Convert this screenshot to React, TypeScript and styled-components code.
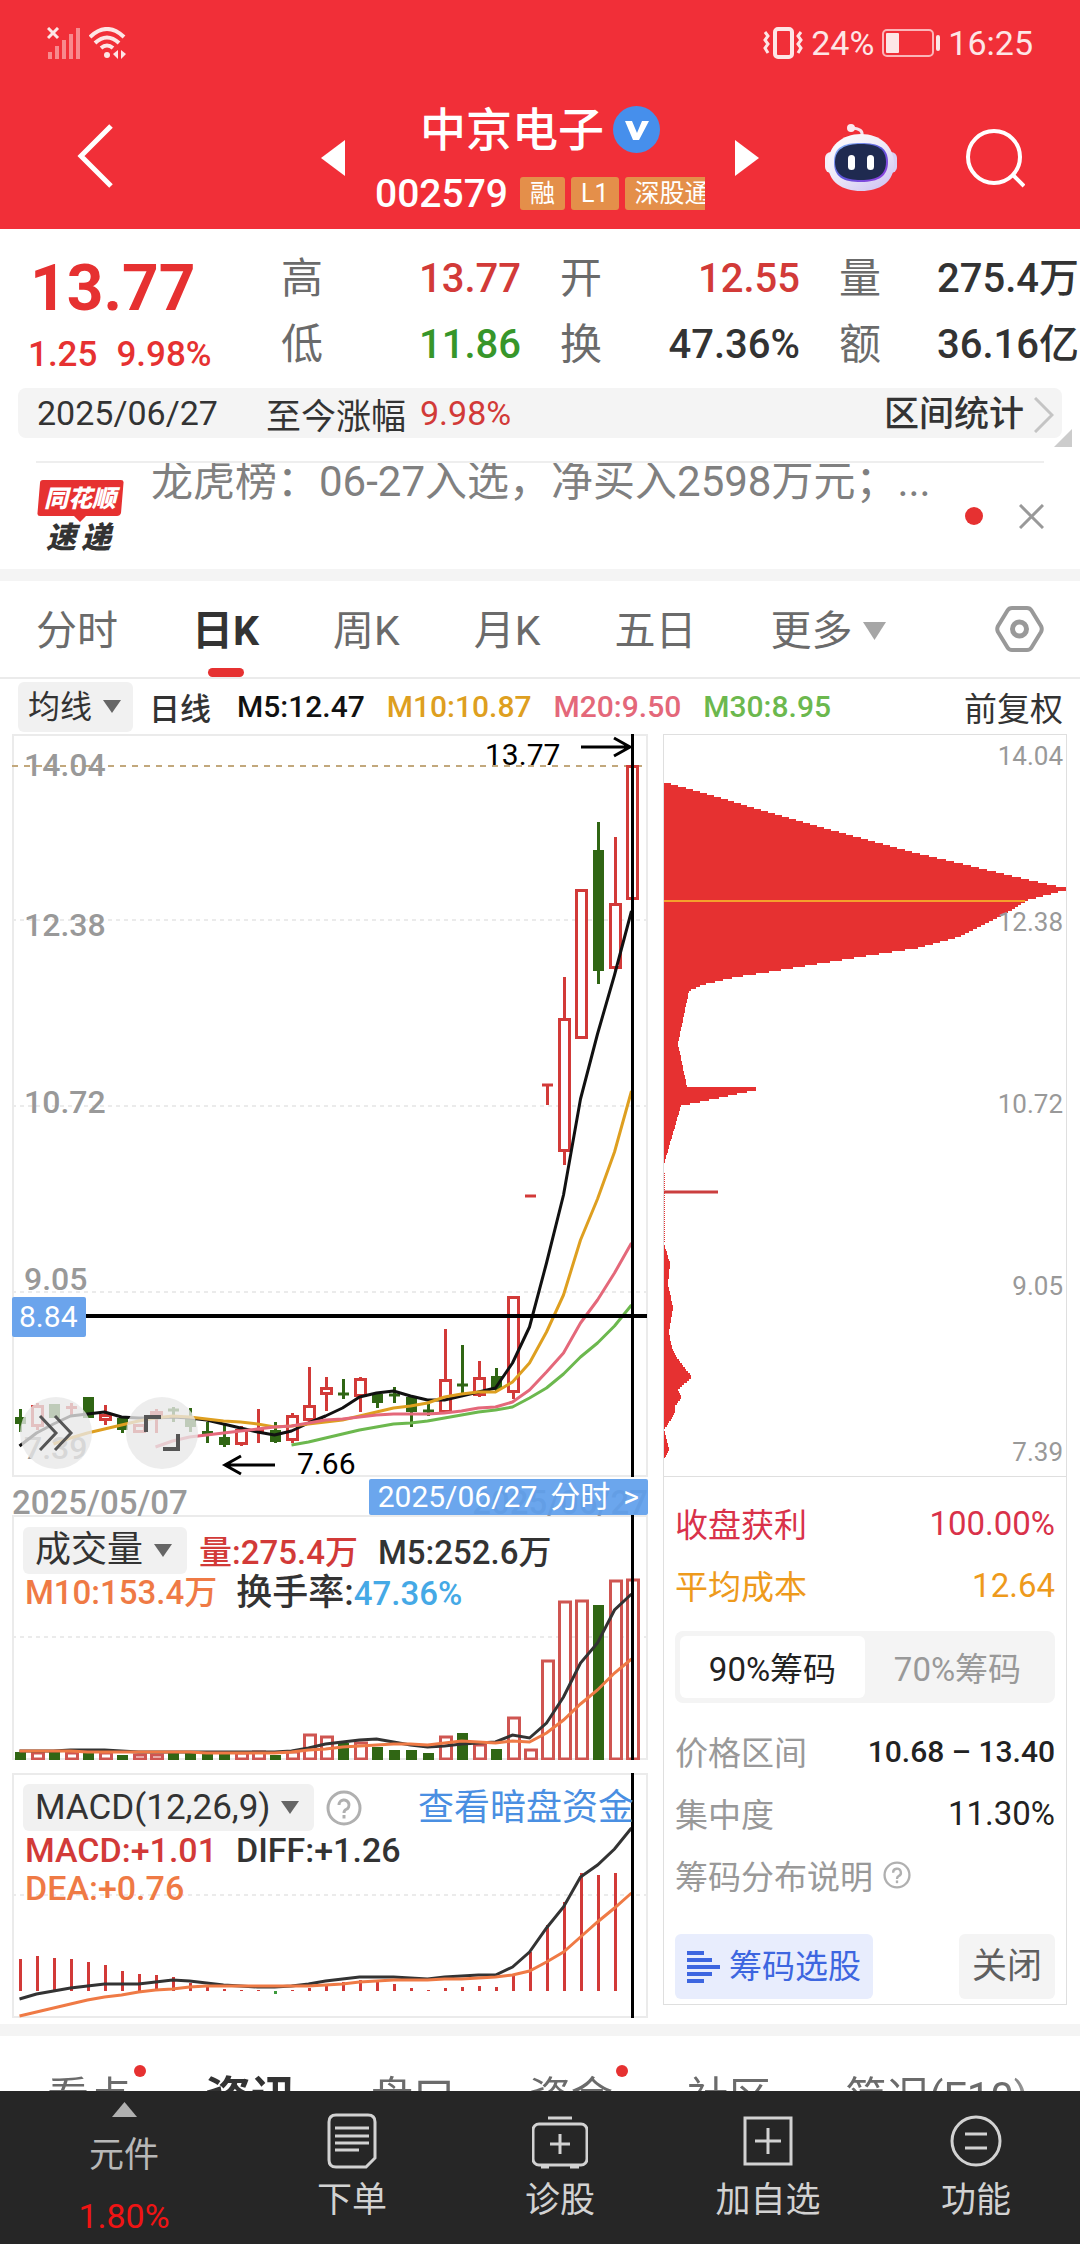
import React, { useState } from "react";
import styled, { createGlobalStyle, css } from "styled-components";

const RED = "#e63131";
const UP = "#d23a38";
const DOWN = "#306614";
const INK = "#333333";
const AMBER = "#de9f20";
const PINK = "#e4687a";
const LIME = "#6cb84e";
const ORANGE = "#ef7a45";
const FONT = 'Roboto, "Noto Sans CJK SC", sans-serif';

const GlobalStyle = createGlobalStyle`
  *, *::before, *::after { box-sizing: border-box; }
  body { margin: 0; background: #fff; font-family: ${FONT}; color: ${INK}; }
  button, select { font: inherit; color: inherit; border: 0; background: none; padding: 0; margin: 0; cursor: pointer; }
  svg { display: block; }
`;

const Screen = styled.div`
  display: flex;
  flex-direction: column;
  height: 100vh;
  background: #fff;
`;

const Content = styled.main`
  flex: 1;
  min-height: 0;
  overflow-y: auto;
  scrollbar-width: none;
`;

/* ---------- header ---------- */

const Header = styled.header`
  flex: none;
  background: #f12f38;
  color: #fff;
`;

const StatusBar = styled.div`
  display: flex;
  justify-content: space-between;
  align-items: center;
  height: 86px;
  padding: 0 47px;
  font-size: 34px;
  line-height: 40px;
  color: #fde6e6;
`;

const StatusGroup = styled.div`
  display: flex;
  align-items: center;
  gap: 8px;
`;

const TitleBar = styled.div`
  display: grid;
  grid-template-columns: 1fr auto 1fr;
  align-items: center;
  height: 143px;
  padding: 0 55px 0 77px;
`;

const StockSwitcher = styled.div`
  display: flex;
  align-items: center;
  gap: 30px;
  margin-left: -22px;
`;

const StockName = styled.div`
  width: 330px;
  padding-top: 8px;
`;

const NameRow = styled.h1`
  display: flex;
  justify-content: center;
  align-items: center;
  gap: 9px;
  margin: 0;
  font-size: 46px;
  font-weight: 500;
  line-height: 64px;
`;

const CodeRow = styled.div`
  display: flex;
  align-items: center;
  height: 64px;
  overflow: hidden;
  gap: 6px;
  font-size: 39px;
  font-weight: 500;
`;

const Code = styled.span`
  margin-right: 6px;
`;

const Tag = styled.span`
  flex: none;
  padding: 0 10px;
  border-radius: 3px;
  background: #e48f4a;
  font-size: 25px;
  font-weight: 400;
  line-height: 33px;
`;

const HeaderActions = styled.div`
  display: flex;
  justify-content: flex-end;
  align-items: center;
  gap: 68px;
`;

/* ---------- quote ---------- */

const Quote = styled.section`
  display: grid;
  grid-template-columns: minmax(0, 1fr) repeat(3, 240px);
  column-gap: 39px;
  padding: 17px 1px 10px 28px;
`;

const Price = styled.div`
  font-weight: 500;
  color: ${RED};
`;

const LastPrice = styled.div`
  padding-left: 2px;
  font-size: 64px;
  font-weight: 700;
  line-height: 86px;
`;

const Change = styled.div`
  display: flex;
  gap: 19px;
  font-size: 35px;
  line-height: 46px;
`;

const StatList = styled.dl`
  display: grid;
  grid-template-columns: auto 1fr;
  grid-auto-rows: 66px;
  align-items: center;
  margin: 0;
`;

const StatLabel = styled.dt`
  font-size: 42px;
  line-height: 66px;
  color: #6b6b6b;
`;

const StatValue = styled.dd<{ $tone?: string }>`
  margin: 0;
  text-align: right;
  white-space: nowrap;
  font-size: 40px;
  font-weight: 500;
  line-height: 66px;
  color: ${(p) => p.$tone || INK};
`;

const RangeBar = styled.div`
  position: relative;
  display: flex;
  align-items: center;
  height: 50px;
  margin: 0 18px;
  padding: 0 8px 0 19px;
  border-radius: 8px;
  background: #f4f4f4;
  font-size: 34px;
`;

const RangeLabel = styled.span`
  margin: 0 14px 0 48px;
  font-size: 35px;
`;

const RangeChange = styled.span`
  color: ${UP};
`;

const RangeButton = styled.button`
  display: flex;
  align-items: center;
  gap: 10px;
  margin-left: auto;
  padding-top: 3px;
  font-size: 35px;
  font-weight: 500;
  line-height: 47px;
`;

const Corner = styled.span`
  position: absolute;
  right: -10px;
  bottom: -9px;
  border-left: 18px solid transparent;
  border-bottom: 18px solid #cccccc;
`;

const News = styled.section`
  display: flex;
  align-items: center;
  height: 108px;
  margin: 23px 36px 0;
  border-top: 2px solid #eeeeee;
`;

const Headline = styled.a`
  flex: 1;
  align-self: flex-start;
  min-width: 0;
  margin-left: 25px;
  padding-bottom: 8px;
  overflow: hidden;
  white-space: nowrap;
  font-size: 42px;
  line-height: 38px;
  color: #808080;
  text-decoration: none;
`;

const UnreadDot = styled.span`
  width: 18px;
  height: 18px;
  margin-right: 36px;
  border-radius: 50%;
  background: ${RED};
`;

const Band = styled.div`
  height: 12px;
  background: #f4f4f4;
`;

/* ---------- period tabs ---------- */

const PeriodTabs = styled.nav`
  display: flex;
  align-items: center;
  gap: 74px;
  height: 98px;
  padding: 0 36px;
  border-bottom: 2px solid #ebebeb;
`;

const PeriodTab = styled.button<{ $active?: boolean }>`
  position: relative;
  display: flex;
  align-items: center;
  gap: 10px;
  padding-top: 4px;
  font-size: 41px;
  line-height: 92px;
  color: #6b6b6b;
  ${(p) =>
    p.$active &&
    css`
      font-weight: 700;
      color: ${INK};
      &::after {
        content: "";
        position: absolute;
        left: 50%;
        bottom: 0;
        width: 36px;
        height: 9px;
        margin-left: -18px;
        border-radius: 5px;
        background: ${RED};
      }
    `}
`;

const SettingsButton = styled.button`
  margin-left: auto;
`;

const Legend = styled.div`
  display: flex;
  align-items: center;
  gap: 22px;
  height: 55px;
  padding: 0 17px 0 18px;
  font-size: 30px;
  font-weight: 500;
`;

const LegendName = styled.span`
  margin: 0 4px 0 -6px;
  font-size: 31px;
`;

const Tone = styled.span<{ $tone?: string }>`
  color: ${(p) => p.$tone || INK};
`;

const Adjust = styled.button`
  margin-left: auto;
  font-size: 33px;
  font-weight: 400;
`;

const Picker = styled.label<{ $size: number }>`
  flex: none;
  display: grid;
  align-items: center;
  height: ${(p) => (p.$size > 32 ? 47 : 50)}px;
  border-radius: 6px;
  background: #f1f1f1;
  font-size: ${(p) => p.$size}px;
  font-weight: 400;
  > * {
    grid-area: 1 / 1;
  }
  > svg {
    justify-self: end;
    margin-right: ${(p) => (p.$size > 32 ? 15 : 12)}px;
    pointer-events: none;
  }
  > select {
    appearance: none;
    height: 100%;
    padding: 0 ${(p) => (p.$size > 32 ? 43 : 40)}px 0 ${(p) => (p.$size > 32 ? 12 : 10)}px;
  }
`;

/* ---------- charts ---------- */

const Board = styled.div`
  display: grid;
  grid-template-columns: minmax(0, 636fr) minmax(0, 404fr);
  column-gap: 15px;
  align-items: start;
  padding: 0 13px 6px 12px;
`;

const Stack = styled.div`
  display: flex;
  flex-direction: column;
`;

const ChartSvg = styled.svg`
  width: 100%;
  height: auto;
  font-family: ${FONT};
`;

const PriceChart = styled.div`
  position: relative;
`;

const ChartTools = styled.div`
  position: absolute;
  left: 8px;
  bottom: 8px;
  display: flex;
  gap: 34px;
`;

const RoundButton = styled.button`
  display: grid;
  place-items: center;
  width: 72px;
  height: 72px;
  border-radius: 50%;
  background: rgba(232, 232, 232, 0.78);
`;

const DateRow = styled.div`
  position: relative;
  display: flex;
  justify-content: space-between;
  align-items: flex-end;
  height: 38px;
  font-size: 33px;
  font-weight: 500;
  line-height: 24px;
  color: #999999;
`;

const DateLink = styled.button`
  position: absolute;
  right: 0;
  bottom: 0;
  display: flex;
  gap: 13px;
  padding: 0 9px;
  border-radius: 2px;
  background: rgba(94, 158, 236, 0.92);
  font-size: 30px;
  font-weight: 400;
  line-height: 36px;
  color: #fff;
`;

const Indicator = styled.section<{ $spaced?: boolean }>`
  display: grid;
  margin-top: ${(p) => (p.$spaced ? 13 : 0)}px;
  > * {
    grid-area: 1 / 1;
  }
`;

const Readout = styled.div<{ $size: number }>`
  z-index: 1;
  padding: 11px 14px 0 11px;
  font-size: ${(p) => p.$size}px;
  font-weight: 500;
`;

const ReadoutHead = styled.div`
  display: flex;
  align-items: center;
  gap: 12px;
`;

const ReadoutLine = styled.div`
  display: flex;
  gap: 19px;
  padding-left: 2px;
  line-height: 38px;
`;

const ReadoutLabel = styled.span`
  font-size: 36px;
`;

const SubValue = styled.span`
  margin-left: 8px;
`;

const FundsLink = styled.a`
  margin-left: auto;
  padding-top: 2px;
  font-size: 36px;
  font-weight: 400;
  line-height: 45px;
  color: #4a8fe2;
  text-decoration: none;
`;

/* ---------- chip distribution ---------- */

const ChipCard = styled.aside`
  border: 1px solid #dfdfdf;
`;

const ChipInfo = styled.div`
  padding: 15px 11px 5px;
  border-top: 1px solid #dfdfdf;
  font-size: 33px;
`;

const InfoRow = styled.div<{ $tone: string; $value?: string; $strong?: boolean }>`
  display: flex;
  align-items: center;
  justify-content: space-between;
  height: 62px;
  white-space: nowrap;
  color: ${(p) => p.$tone};
  > :last-child {
    color: ${(p) => p.$value || p.$tone};
    font-size: ${(p) => (p.$strong ? 30 : 33)}px;
    font-weight: ${(p) => (p.$strong ? 500 : 400)};
  }
`;

const HelpButton = styled.button`
  display: flex;
  align-items: center;
  gap: 10px;
`;

const Segments = styled.div`
  display: grid;
  grid-template-columns: 1fr 1fr;
  height: 72px;
  margin: 15px 0 17px;
  padding: 5px;
  border-radius: 8px;
  background: #f4f4f4;
`;

const Segment = styled.button<{ $active: boolean }>`
  border-radius: 6px;
  background: ${(p) => (p.$active ? "#fff" : "transparent")};
  color: ${(p) => (p.$active ? "#222" : "#999")};
`;

const Actions = styled.div`
  display: flex;
  justify-content: space-between;
  margin-top: 28px;
`;

const ActionButton = styled.button<{ $primary?: boolean }>`
  display: flex;
  align-items: center;
  gap: 9px;
  padding: 0 ${(p) => (p.$primary ? 12 : 13)}px;
  border-radius: 6px;
  font-size: ${(p) => (p.$primary ? 33 : 35)}px;
  line-height: 65px;
  background: ${(p) => (p.$primary ? "#e8edfd" : "#f4f4f4")};
  color: ${(p) => (p.$primary ? "#3d66e0" : "#5f5f5f")};
`;

/* ---------- lower tabs and bottom bar ---------- */

const SectionTabs = styled.nav`
  display: flex;
  align-items: center;
  gap: 74px;
  height: 124px;
  padding-left: 47px;
  overflow: hidden;
  mask-image: linear-gradient(to right, #000 93%, transparent 99%);
`;

const SectionTab = styled.button<{ $active?: boolean }>`
  position: relative;
  flex: none;
  font-size: ${(p) => (p.$active ? 46 : 42)}px;
  font-weight: ${(p) => (p.$active ? 700 : 400)};
  line-height: 60px;
  color: ${(p) => (p.$active ? INK : "#6b6b6b")};
`;

const Badge = styled.span`
  position: absolute;
  top: -3px;
  right: -15px;
  width: 12px;
  height: 12px;
  border-radius: 50%;
  background: ${RED};
`;

const BottomBar = styled.nav`
  flex: none;
  display: grid;
  grid-template-columns: 248fr repeat(4, 208fr);
  height: 153px;
  background: #262626;
`;

const BarItem = styled.button`
  display: flex;
  flex-direction: column;
  align-items: center;
  padding-top: 22px;
  font-size: 35px;
  line-height: 64px;
  color: #d2d2d2;
`;

const SectorItem = styled.button`
  display: flex;
  flex-direction: column;
  align-items: center;
  padding-top: 11px;
  font-size: 35px;
  line-height: 78px;
  color: #b8b8b8;
`;

const SectorChange = styled.span`
  font-size: 34px;
  line-height: 42px;
  color: #f01414;
`;

/* ---------- data ---------- */

/* open/close box, then high/low; every value is a y position on the price scale */
type Candle = [kind: "r" | "g", top: number, bottom: number, high: number, low: number];

const candles: Candle[] = [
  ["g", 1417, 1424, 1409, 1432], ["r", 1405, 1427, 1403, 1430], ["g", 1404, 1418, 1404, 1418],
  ["r", 1406, 1409, 1403, 1415], ["g", 1397, 1418, 1397, 1418], ["r", 1414, 1421, 1405, 1425],
  ["g", 1418, 1430, 1418, 1433], ["r", 1424, 1433, 1424, 1433], ["r", 1411, 1416, 1409, 1433],
  ["g", 1409, 1411, 1407, 1422], ["g", 1418, 1427, 1408, 1432], ["g", 1431, 1434, 1422, 1443],
  ["g", 1437, 1445, 1425, 1447], ["r", 1429, 1445, 1426, 1446], ["r", 1430, 1431, 1409, 1443],
  ["g", 1430, 1442, 1422, 1443], ["r", 1415, 1441, 1413, 1443], ["r", 1405, 1421, 1367, 1421],
  ["r", 1387, 1395, 1377, 1411], ["g", 1393, 1395, 1379, 1399], ["r", 1378, 1397, 1377, 1412],
  ["g", 1394, 1403, 1393, 1408], ["g", 1394, 1396, 1387, 1403], ["g", 1397, 1412, 1396, 1427],
  ["g", 1410, 1412, 1404, 1416], ["r", 1379, 1413, 1329, 1414], ["g", 1384, 1386, 1345, 1393],
  ["r", 1377, 1396, 1361, 1397], ["g", 1376, 1390, 1368, 1391], ["r", 1296, 1393, 1296, 1399],
  ["r", 1195, 1197, 1195, 1197], ["r", 1084, 1086, 1084, 1105], ["r", 1018, 1152, 977, 1165],
  ["r", 889, 1039, 889, 1039], ["g", 850, 971, 822, 984], ["r", 903, 969, 837, 970],
  ["r", 765, 900, 765, 900],
];

const STEP = 17;
const cx = (i: number) => 20.5 + i * STEP;

const ma5 = [1446, 1433, 1424, 1416, 1414, 1412, 1417, 1418, 1418, 1417, 1418, 1420, 1424, 1428, 1432, 1435, 1431, 1423, 1416, 1408, 1397, 1393, 1391, 1396, 1400, 1400, 1396, 1392, 1388, 1363, 1327, 1263, 1195, 1099, 1034, 975, 911];
const ma10 = [1444, 1438, 1433, 1429, 1425, 1421, 1418, 1416, 1417, 1419, 1421, 1422, 1424, 1427, 1426, 1424, 1422, 1420, 1416, 1412, 1408, 1406, 1403, 1397, 1394, 1392, 1392, 1382, 1363, 1332, 1295, 1240, 1199, 1152, 1091];
const ma20 = [1447, 1441, 1437, 1435, 1433, 1431, 1429, 1427, 1426, 1423, 1420, 1419, 1417, 1415, 1414, 1414, 1414, 1413, 1411, 1408, 1407, 1402, 1390, 1372, 1353, 1323, 1300, 1273, 1243];
const ma30 = [1445, 1442, 1438, 1434, 1430, 1427, 1424, 1423, 1421, 1418, 1415, 1412, 1410, 1407, 1398, 1388, 1374, 1357, 1343, 1326, 1305];

const volumeTops = [1752, 1752, 1752, 1752, 1752, 1752, 1755, 1754, 1754, 1753, 1753, 1754, 1754, 1752, 1751, 1755, 1751, 1734, 1736, 1743, 1742, 1747, 1750, 1750, 1753, 1736, 1733, 1744, 1749, 1717, 1749, 1660, 1601, 1600, 1605, 1580, 1579];
const volumeMa5 = [1751, 1751, 1751, 1750, 1750, 1750, 1751, 1752, 1752, 1752, 1752, 1752, 1752, 1752, 1752, 1752, 1751, 1748, 1744, 1742, 1740, 1739, 1742, 1745, 1747, 1746, 1744, 1743, 1742, 1735, 1738, 1723, 1697, 1663, 1643, 1610, 1594];
const volumeMa10 = [1751, 1751, 1751, 1751, 1752, 1752, 1752, 1752, 1752, 1752, 1752, 1753, 1753, 1753, 1753, 1753, 1752, 1750, 1749, 1747, 1746, 1745, 1744, 1744, 1745, 1743, 1741, 1742, 1743, 1741, 1742, 1733, 1720, 1704, 1690, 1673, 1659];

const macdTops = [1959, 1956, 1958, 1959, 1962, 1965, 1971, 1974, 1975, 1977, 1983, 1986, 1989, 1990, 1990, 1994, 1990, 1988, 1986, 1982, 1980, 1982, 1984, 1988, 1990, 1988, 1987, 1986, 1987, 1975, 1952, 1925, 1902, 1873, 1875, 1873, 1858];
const diff = [1999, 1994, 1991, 1988, 1986, 1984, 1984, 1984, 1982, 1980, 1981, 1983, 1985, 1986, 1987, 1987, 1986, 1984, 1981, 1979, 1977, 1977, 1977, 1978, 1979, 1977, 1976, 1975, 1975, 1967, 1952, 1928, 1907, 1877, 1865, 1849, 1828];
const dea = [2016, 2012, 2008, 2004, 2000, 1997, 1995, 1992, 1990, 1989, 1987, 1986, 1986, 1986, 1986, 1986, 1986, 1986, 1985, 1984, 1982, 1981, 1980, 1980, 1980, 1979, 1979, 1978, 1977, 1975, 1971, 1962, 1952, 1937, 1922, 1908, 1893];

const line = (ys: number[]) => {
  const start = candles.length - ys.length;
  return ys.map((y, i) => `${cx(i + start)},${y}`).join(" ");
};

/* chip weight (bar length) at a y position, interpolated between these knots */
const upperChips: [number, number][] = [
  [781, 0], [796, 54], [808, 93], [830, 171], [851, 248], [864, 303], [875, 348], [886, 396], [887, 402],
  [889, 402], [891, 394], [899, 364], [913, 341], [936, 295], [947, 254], [955, 202], [970, 111], [976, 72],
  [984, 38], [990, 25], [1043, 14], [1086, 23], [1087, 92], [1089, 92], [1105, 17], [1163, 0],
];
const lowerChips: [number, number][] = [
  [1243, 0], [1262, 6], [1283, 4], [1307, 9], [1332, 5], [1347, 8], [1357, 13], [1376, 28], [1389, 14],
  [1396, 18], [1405, 11], [1412, 11], [1426, 2], [1429, 0], [1449, 5], [1458, 1],
];

const steppedArea = (knots: [number, number][], x0: number) => {
  const first = knots[0][0];
  const last = knots[knots.length - 1][0];
  let d = `M${x0},${first}`;
  for (let y = first; y < last; y += 2) {
    const i = Math.max(0, knots.findIndex((k) => k[0] > y) - 1);
    const [ya, a] = knots[i];
    const [yb, b] = knots[i + 1];
    const w = Math.round(a + ((b - a) * (y - ya)) / (yb - ya));
    d += `H${x0 + w}V${Math.min(y + 2, last)}`;
  }
  return `${d}H${x0}Z`;
};

/* ---------- small drawings ---------- */

const Triangle = ({ w, h, dir, fill }: { w: number; h: number; dir: "l" | "r" | "u" | "d"; fill: string }) => {
  const points = {
    l: `${w},0 ${w},${h} 0,${h / 2}`,
    r: `0,0 0,${h} ${w},${h / 2}`,
    u: `0,${h} ${w},${h} ${w / 2},0`,
    d: `0,0 ${w},0 ${w / 2},${h}`,
  }[dir];
  return (
    <svg width={w} height={h} viewBox={`0 0 ${w} ${h}`} aria-hidden="true">
      <polygon points={points} fill={fill} />
    </svg>
  );
};

const Question = ({ size }: { size: number }) => (
  <svg width={size} height={size} viewBox="0 0 36 36" fill="none" stroke="#b0b0b0" strokeWidth="3" aria-hidden="true">
    <circle cx="18" cy="18" r="16" />
    <path d="M13 15a5 5 0 1 1 7 4.500q-2 1-2 3.500" />
    <path d="M18 25v3.500" />
  </svg>
);

const Robot = () => (
  <svg width="72" height="67" viewBox="0 0 72 67" aria-hidden="true">
    <defs>
      <linearGradient id="shell" x1="0" y1="0" x2="0.700" y2="1">
        <stop offset="0" stopColor="#ffffff" />
        <stop offset="0.550" stopColor="#eeeaf8" />
        <stop offset="1" stopColor="#d3c8f3" />
      </linearGradient>
      <linearGradient id="visor" x1="0" y1="0" x2="1" y2="1">
        <stop offset="0" stopColor="#8fc4ff" />
        <stop offset="0.500" stopColor="#5b54d8" />
        <stop offset="1" stopColor="#9a3fe0" />
      </linearGradient>
    </defs>
    <path d="M37 11q1-6-9-7" fill="none" stroke="#f6e3ee" strokeWidth="3" />
    <circle cx="26" cy="4" r="4" fill="#fbe9f0" />
    <rect x="0" y="28" width="12" height="21" rx="6" fill="#f5eef8" />
    <rect x="60" y="28" width="12" height="21" rx="6" fill="#d8d0f4" />
    <path d="M36 10C55 10 69 22 69 40S55 67 36 67 3 58 3 40 17 10 36 10Z" fill="url(#shell)" />
    <path d="M36 19C54 19 63 24 63 38S54 58 36 58 9 53 9 38 18 19 36 19Z" fill="url(#visor)" />
    <path d="M36 20C52 20 61 25 61 38S52 56 36 56 10 51 10 38 20 20 36 20Z" fill="#1f2a50" />
    <rect x="23" y="31" width="7" height="15" rx="3.500" fill="#fff" />
    <rect x="42" y="31" width="7" height="15" rx="3.500" fill="#fff" />
  </svg>
);

const ExpressLogo = () => (
  <svg width="90" height="74" viewBox="0 0 90 74" role="img" aria-label="同花顺速递" fontFamily={FONT} fontStyle="italic" fontWeight="900">
    <path d="M7 1H85Q88 1 87.500 4L85 34Q84 37 81 37H50L44 43 38 37H4Q1 37 1.500 34L4 4Q4 1 7 1Z" fill={RED} />
    <text x="8" y="28" fontSize="24" fill="#fff">同花顺</text>
    <text x="10" y="69" fontSize="30" fill={INK}>速</text>
    <text x="45" y="69" fontSize="30" fill={INK}>递</text>
  </svg>
);

const barIcons: { label: string; icon: React.ReactNode }[] = [
  {
    label: "下单",
    icon: (
      <>
        <path d="M12 2H44Q51 2 51 9V45L42 54H12Q5 54 5 47V9Q5 2 12 2Z" />
        <path d="M11 15H45M11 23H45M11 30H45M11 37H35" />
      </>
    ),
  },
  {
    label: "诊股",
    icon: (
      <>
        <rect x="1" y="11" width="54" height="41" rx="6" />
        <path d="M16 5H40M9 54H17M38 54H47M28 21V41M18 31H38" />
      </>
    ),
  },
  {
    label: "加自选",
    icon: (
      <>
        <rect x="5" y="5" width="46" height="46" />
        <path d="M28 15V41M15 28H41" />
      </>
    ),
  },
  {
    label: "功能",
    icon: (
      <>
        <circle cx="28" cy="28" r="24" />
        <path d="M17 21H39M17 35H39" />
      </>
    ),
  },
];

/* ---------- chart panels ---------- */

const Crosshair = ({ y1, y2 }: { y1: number; y2: number }) => (
  <line x1="633.500" x2="633.500" y1={y1} y2={y2} stroke="#000" strokeWidth="3" />
);

const CandleChart = () => (
  <ChartSvg viewBox="13 734 636 743" role="img" aria-label="日K线图">
    <rect x="14" y="735" width="634" height="741" fill="none" stroke="#ebebeb" strokeWidth="2" />
    <g stroke="#ebebeb" strokeWidth="2" strokeDasharray="4 4">
      <path d="M13 920H648M13 1106H648M13 1292H648" />
    </g>
    <path d="M13 766H648" stroke="#c2a87c" strokeWidth="2" strokeDasharray="6 6" />
    <g fontSize="32" fontWeight="500" fill="#999">
      <text x="25" y="776">14.04</text>
      <text x="25" y="936">12.38</text>
      <text x="25" y="1113">10.72</text>
      <text x="25" y="1290">9.05</text>
      <text x="25" y="1459">7.39</text>
    </g>
    {candles.map(([kind, top, bottom, high, low], i) => {
      const x = cx(i) + 1;
      const color = kind === "r" ? UP : DOWN;
      const flat = bottom - top < 4;
      return (
        <g key={i} stroke={color} strokeWidth="3">
          {high < top && <path d={`M${x} ${high}V${top}`} />}
          {low > bottom && <path d={`M${x} ${bottom}V${low}`} />}
          {flat ? (
            <path d={`M${x - 5.5} ${(top + bottom) / 2}h11`} />
          ) : kind === "r" ? (
            <rect x={x - 5} y={top + 1.5} width="10" height={bottom - top - 3} fill="#fff" />
          ) : (
            <rect x={x - 5.5} y={top} width="11" height={bottom - top} fill={color} stroke="none" />
          )}
        </g>
      );
    })}
    <g fill="none" strokeWidth="3" strokeLinejoin="round">
      <polyline points={line(ma5)} stroke="#111" />
      <polyline points={line(ma10)} stroke={AMBER} />
      <polyline points={line(ma20)} stroke={PINK} />
      <polyline points={line(ma30)} stroke={LIME} />
    </g>
    <path d="M87 1316H648" stroke="#000" strokeWidth="4" />
    <Crosshair y1={734} y2={1477} />
    <g fill="none" stroke="#000" strokeWidth="3">
      <path d="M582 747H631M615 738L631 747L615 756" />
      <path d="M276 1465H226M242 1456L226 1465L242 1474" />
    </g>
    <g fontSize="30" fill="#000">
      <text x="486" y="765">13.77</text>
      <text x="298" y="1474">7.66</text>
    </g>
    <rect x="13" y="1297" width="74" height="40" rx="2" fill="#6ba4ec" />
    <text x="20" y="1327" fontSize="30" fill="#fff">8.84</text>
  </ChartSvg>
);

const VolumeChart = () => (
  <ChartSvg viewBox="13 1515 636 245" role="img" aria-label="成交量图">
    <rect x="14" y="1516" width="634" height="243" fill="none" stroke="#ebebeb" strokeWidth="2" />
    <path d="M13 1637H648" stroke="#ebebeb" strokeWidth="2" strokeDasharray="4 4" />
    {volumeTops.map((top, i) =>
      candles[i][0] === "r" ? (
        <rect key={i} x={cx(i) - 4} y={top + 1} width="11" height={1758 - top} fill="#fff" stroke="#cf5551" strokeWidth="3" />
      ) : (
        <rect key={i} x={cx(i) - 4.5} y={top} width="11" height={1760 - top} fill={DOWN} />
      )
    )}
    <polyline points={line(volumeMa5)} fill="none" stroke="#333" strokeWidth="3" />
    <polyline points={line(volumeMa10)} fill="none" stroke={ORANGE} strokeWidth="3" />
    <Crosshair y1={1515} y2={1760} />
  </ChartSvg>
);

const MacdChart = () => (
  <ChartSvg viewBox="13 1773 636 245" role="img" aria-label="MACD图">
    <rect x="14" y="1774" width="634" height="243" fill="none" stroke="#ebebeb" strokeWidth="2" />
    <path d="M13 1895H648" stroke="#ebebeb" strokeWidth="2" strokeDasharray="4 4" />
    {macdTops.map((y, i) => (
      <path key={i} d={`M${cx(i) + 1} ${y}V1991`} stroke={y > 1991 ? "#3c9a3c" : UP} strokeWidth="3" />
    ))}
    <polyline points={line(diff)} fill="none" stroke="#333" strokeWidth="3" />
    <polyline points={line(dea)} fill="none" stroke={ORANGE} strokeWidth="3" />
    <Crosshair y1={1773} y2={2018} />
  </ChartSvg>
);

const ChipChart = () => (
  <ChartSvg viewBox="665 735 402 741" role="img" aria-label="筹码分布图">
    <path d={steppedArea(upperChips, 665)} fill={RED} />
    <path d={steppedArea(lowerChips, 665)} fill={RED} />
    <path d="M665 1192H719" stroke="#cb3f3f" strokeWidth="3" />
    <path d="M665.500 1173V1243" stroke={RED} strokeDasharray="1 1" />
    <path d="M665 901H1026" stroke="#f5a02c" strokeWidth="2" />
    <g fontSize="26" fill="#999" textAnchor="end">
      <text x="1064" y="765">14.04</text>
      <text x="1064" y="931">12.38</text>
      <text x="1064" y="1113">10.72</text>
      <text x="1064" y="1295">9.05</text>
      <text x="1064" y="1461">7.39</text>
    </g>
  </ChartSvg>
);

const PickerBox = ({ label, size }: { label: string; size: number }) => (
  <Picker $size={size}>
    <select aria-label={label} defaultValue={label}>
      <option>{label}</option>
    </select>
    <Triangle w={18} h={13} dir="d" fill="#666" />
  </Picker>
);

/* ---------- page ---------- */

const stats: [string, string, string?][][] = [
  [["高", "13.77", UP], ["低", "11.86", "#37962a"]],
  [["开", "12.55", UP], ["换", "47.36%"]],
  [["量", "275.4万"], ["额", "36.16亿"]],
];

const periods = ["分时", "日K", "周K", "月K", "五日"];
const sections = ["看点", "资讯", "盘口", "资金", "社区", "简况(F10)"];

export default function App() {
  const [period, setPeriod] = useState("日K");
  const [section, setSection] = useState("资讯");
  const [share, setShare] = useState("90%筹码");

  return (
    <Screen>
      <GlobalStyle />
      <Header>
        <StatusBar>
          <StatusGroup>
            <svg width="34" height="32" viewBox="0 0 34 32" aria-hidden="true">
              <path d="M3 32V25M10 32V19M17 32V13M24 32V7M31 32V1" stroke="#f8898d" strokeWidth="4" />
              <path d="M1 1L11 11M11 1L1 11" stroke="#fde6e6" strokeWidth="3" />
            </svg>
            <svg width="38" height="32" viewBox="0 0 38 32" fill="none" stroke="#fde6e6" strokeWidth="4" aria-hidden="true">
              <path d="M1 10Q18-6 35 10M6 16Q18 5 30 16M12 21Q18 16 24 21" />
              <circle cx="18" cy="28" r="3" fill="#fde6e6" stroke="none" />
              <path d="M29 23V32L24 27ZM32 23V32L37 27Z" fill="#fde6e6" stroke="none" />
            </svg>
          </StatusGroup>
          <StatusGroup>
            <svg width="40" height="32" viewBox="0 0 40 32" fill="none" stroke="#fde6e6" strokeWidth="4" aria-hidden="true">
              <rect x="12" y="2" width="17" height="28" rx="3" />
              <path d="M2 5L5 9 2 13 5 17 2 21 5 26M38 5L35 9 38 13 35 17 38 21 35 26" strokeWidth="3" />
            </svg>
            <span>24%</span>
            <svg width="58" height="28" viewBox="0 0 58 28" fill="none" aria-hidden="true">
              <rect x="1" y="1" width="50" height="26" rx="4" stroke="#fbb5b8" strokeWidth="2" />
              <rect x="4" y="4" width="13" height="20" rx="1" fill="#fde6e6" />
              <rect x="54" y="6" width="4" height="16" rx="2" fill="#fde6e6" />
            </svg>
            <span>16:25</span>
          </StatusGroup>
        </StatusBar>
        <TitleBar>
          <div>
            <button aria-label="返回">
              <svg width="36" height="64" viewBox="0 0 36 64" fill="none" stroke="#fff" strokeWidth="5" aria-hidden="true">
                <path d="M34 2L4 32L34 62" />
              </svg>
            </button>
          </div>
          <StockSwitcher>
            <button aria-label="上一只"><Triangle w={24} h={36} dir="l" fill="#fff" /></button>
            <StockName>
              <NameRow>
                中京电子
                <svg width="47" height="47" viewBox="0 0 47 47" aria-hidden="true">
                  <circle cx="23.500" cy="23.500" r="23.500" fill="#468fec" />
                  <path d="M12 15H19L24 27 29 15H36L26 34H20Z" fill="#fff" />
                </svg>
              </NameRow>
              <CodeRow>
                <Code>002579</Code>
                <Tag>融</Tag>
                <Tag>L1</Tag>
                <Tag>深股通</Tag>
              </CodeRow>
            </StockName>
            <button aria-label="下一只"><Triangle w={24} h={36} dir="r" fill="#fff" /></button>
          </StockSwitcher>
          <HeaderActions>
            <button aria-label="智能助手"><Robot /></button>
            <button aria-label="搜索">
              <svg width="60" height="60" viewBox="0 0 60 60" fill="none" stroke="#fff" strokeWidth="4" aria-hidden="true">
                <circle cx="29" cy="29" r="26" />
                <path d="M48 47L59 58" />
              </svg>
            </button>
          </HeaderActions>
        </TitleBar>
      </Header>

      <Content>
        <Quote>
          <Price>
            <LastPrice>13.77</LastPrice>
            <Change><span>1.25</span><span>9.98%</span></Change>
          </Price>
          {stats.map((group) => (
            <StatList key={group[0][0]}>
              {group.map(([label, value, tone]) => (
                <React.Fragment key={label}>
                  <StatLabel>{label}</StatLabel>
                  <StatValue $tone={tone}>{value}</StatValue>
                </React.Fragment>
              ))}
            </StatList>
          ))}
        </Quote>

        <RangeBar>
          <span>2025/06/27</span>
          <RangeLabel>至今涨幅</RangeLabel>
          <RangeChange>9.98%</RangeChange>
          <RangeButton>
            区间统计
            <svg width="20" height="36" viewBox="0 0 20 36" fill="none" stroke="#c4c4c4" strokeWidth="3" aria-hidden="true">
              <path d="M1 1L18 18L1 35" />
            </svg>
          </RangeButton>
          <Corner />
        </RangeBar>

        <News>
          <ExpressLogo />
          <Headline href="#news">龙虎榜：06-27入选，净买入2598万元；...</Headline>
          <UnreadDot />
          <button aria-label="关闭快讯">
            <svg width="25" height="25" viewBox="0 0 25 25" stroke="#999" strokeWidth="3" aria-hidden="true">
              <path d="M1 1L24 24M24 1L1 24" />
            </svg>
          </button>
        </News>
        <Band />

        <PeriodTabs>
          {periods.map((p) => (
            <PeriodTab key={p} $active={p === period} onClick={() => setPeriod(p)}>{p}</PeriodTab>
          ))}
          <PeriodTab aria-haspopup="menu">
            更多
            <Triangle w={23} h={18} dir="d" fill="#a6a6a6" />
          </PeriodTab>
          <SettingsButton aria-label="图表设置">
            <svg width="49" height="46" viewBox="0 0 49 46" fill="none" stroke="#999" strokeWidth="4" strokeLinejoin="round" aria-hidden="true">
              <path d="M17 2H32Q35 2 36.500 4.500L46 20Q47.500 23 46 26L36.500 41.500Q35 44 32 44H17Q14 44 12.500 41.500L3 26Q1.500 23 3 20L12.500 4.500Q14 2 17 2Z" />
              <circle cx="24.500" cy="23" r="7" strokeWidth="5" />
            </svg>
          </SettingsButton>
        </PeriodTabs>

        <Legend>
          <PickerBox label="均线" size={32} />
          <LegendName>日线</LegendName>
          <Tone $tone="#111">M5:12.47</Tone>
          <Tone $tone={AMBER}>M10:10.87</Tone>
          <Tone $tone={PINK}>M20:9.50</Tone>
          <Tone $tone={LIME}>M30:8.95</Tone>
          <Adjust>前复权</Adjust>
        </Legend>

        <Board>
          <Stack>
            <PriceChart>
              <CandleChart />
              <ChartTools>
                <RoundButton aria-label="展开">
                  <svg width="36" height="36" viewBox="0 0 36 36" fill="none" stroke="#555" strokeWidth="3" aria-hidden="true">
                    <path d="M2 1L18 18L2 35M17 1L33 18L17 35" />
                  </svg>
                </RoundButton>
                <RoundButton aria-label="全屏">
                  <svg width="38" height="38" viewBox="0 0 38 38" fill="none" stroke="#555" strokeWidth="4" aria-hidden="true">
                    <path d="M3 18V3H18M20 35H35V20" />
                  </svg>
                </RoundButton>
              </ChartTools>
            </PriceChart>
            <DateRow>
              <span>2025/05/07</span>
              <span>2025/06/27</span>
              <DateLink>
                <span>2025/06/27</span>
                <span>分时</span>
                <span>&gt;</span>
              </DateLink>
            </DateRow>
            <Indicator>
              <VolumeChart />
              <Readout $size={33}>
                <ReadoutHead>
                  <PickerBox label="成交量" size={36} />
                  <Tone $tone={UP}>量:275.4万</Tone>
                  <SubValue>M5:252.6万</SubValue>
                </ReadoutHead>
                <ReadoutLine>
                  <Tone $tone={ORANGE}>M10:153.4万</Tone>
                  <span><ReadoutLabel>换手率:</ReadoutLabel><Tone $tone="#45a9e6">47.36%</Tone></span>
                </ReadoutLine>
              </Readout>
            </Indicator>
            <Indicator $spaced>
              <MacdChart />
              <Readout $size={34}>
                <ReadoutHead>
                  <PickerBox label="MACD(12,26,9)" size={35} />
                  <button aria-label="指标说明"><Question size={36} /></button>
                  <FundsLink href="#funds">查看暗盘资金</FundsLink>
                </ReadoutHead>
                <ReadoutLine>
                  <Tone $tone={UP}>MACD:+1.01</Tone>
                  <span>DIFF:+1.26</span>
                </ReadoutLine>
                <ReadoutLine>
                  <Tone $tone={ORANGE}>DEA:+0.76</Tone>
                </ReadoutLine>
              </Readout>
            </Indicator>
          </Stack>

          <ChipCard>
            <ChipChart />
            <ChipInfo>
              <InfoRow $tone="#d9324a"><span>收盘获利</span><span>100.00%</span></InfoRow>
              <InfoRow $tone="#ee9a1c"><span>平均成本</span><span>12.64</span></InfoRow>
              <Segments>
                {["90%筹码", "70%筹码"].map((s) => (
                  <Segment key={s} $active={s === share} aria-pressed={s === share} onClick={() => setShare(s)}>{s}</Segment>
                ))}
              </Segments>
              <InfoRow $tone="#999" $value="#222" $strong><span>价格区间</span><span>10.68 – 13.40</span></InfoRow>
              <InfoRow $tone="#999" $value="#222"><span>集中度</span><span>11.30%</span></InfoRow>
              <InfoRow $tone="#999">
                <HelpButton>筹码分布说明<Question size={28} /></HelpButton>
              </InfoRow>
              <Actions>
                <ActionButton $primary>
                  <svg width="33" height="32" viewBox="0 0 33 32" stroke="#3d66e0" strokeWidth="4" aria-hidden="true">
                    <path d="M0 2H17M0 9H25M0 16H33M0 23H25M0 30H17" />
                  </svg>
                  筹码选股
                </ActionButton>
                <ActionButton>关闭</ActionButton>
              </Actions>
            </ChipInfo>
          </ChipCard>
        </Board>
        <Band />

        <SectionTabs>
          {sections.map((s) => (
            <SectionTab key={s} $active={s === section} onClick={() => setSection(s)}>
              {s}
              {(s === "看点" || s === "资金") && <Badge />}
            </SectionTab>
          ))}
        </SectionTabs>
      </Content>

      <BottomBar>
        <SectorItem>
          <Triangle w={25} h={15} dir="u" fill="#b0b0b0" />
          元件
          <SectorChange>1.80%</SectorChange>
        </SectorItem>
        {barIcons.map(({ label, icon }) => (
          <BarItem key={label}>
            <svg width="56" height="56" viewBox="0 0 56 56" fill="none" stroke="#d2d2d2" strokeWidth="3" aria-hidden="true">
              {icon}
            </svg>
            {label}
          </BarItem>
        ))}
      </BottomBar>
    </Screen>
  );
}
